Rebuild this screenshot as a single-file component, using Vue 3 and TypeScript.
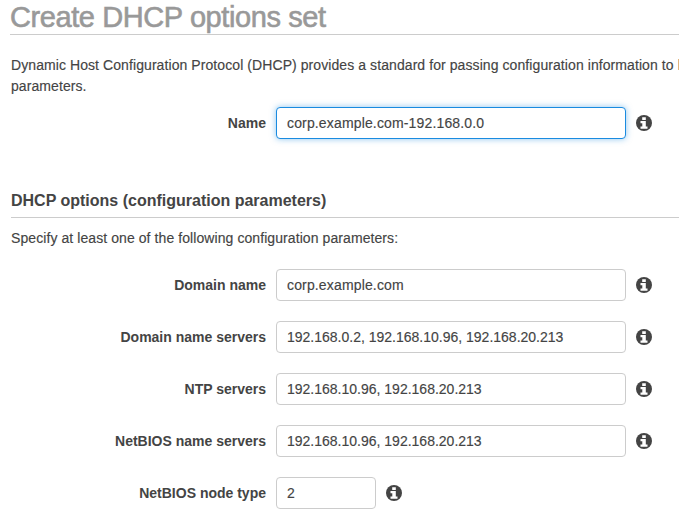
<script setup lang="ts">
import { reactive } from 'vue'

interface Field {
  id: string
  label: string
  value: string
  focused?: boolean
  narrow?: boolean
  host?: boolean
}

const fields = reactive<Field[]>([
  { id: 'name', label: 'Name', value: 'corp.example.com-192.168.0.0', focused: true, host: true },
  { id: 'domain', label: 'Domain name', value: 'corp.example.com', host: true },
  { id: 'dns', label: 'Domain name servers', value: '192.168.0.2, 192.168.10.96, 192.168.20.213' },
  { id: 'ntp', label: 'NTP servers', value: '192.168.10.96, 192.168.20.213' },
  { id: 'netbios', label: 'NetBIOS name servers', value: '192.168.10.96, 192.168.20.213' },
  { id: 'node', label: 'NetBIOS node type', value: '2', narrow: true },
])
</script>

<template>
  <main class="page">
    <h1>Create DHCP options set</h1>
    <p class="intro">Dynamic Host Configuration Protocol (DHCP) provides a standard for passing configuration information to h<br />parameters.</p>
    <template v-for="(field, i) in fields" :key="field.id">
      <section v-if="i === 1" class="section">
        <h2>DHCP options (configuration parameters)</h2>
        <p>Specify at least one of the following configuration parameters:</p>
      </section>
      <div class="row">
        <label :for="field.id">{{ field.label }}</label>
        <input :id="field.id" v-model="field.value" type="text" spellcheck="false" :class="{ focused: field.focused, narrow: field.narrow, host: field.host }" />
        <svg class="info" width="16" height="16" viewBox="0 0 16 16">
          <circle cx="8" cy="8" r="8" />
          <path d="M6.2 2.3h3.6v2.8H6.2zM4.5 6.1h5.3v5.4h1.7v2.2h-7v-2.2h1.8V8.2H4.5z" />
        </svg>
      </div>
    </template>
  </main>
</template>

<style>
body { margin: 0; background: #fff; }
</style>
<style scoped>
.page { box-sizing: border-box; width: 100%; height: 522px; overflow: hidden; padding-left: 11px; font-family: "Liberation Sans", Arial, sans-serif; font-size: 14px; line-height: 21px; color: #444; -webkit-text-stroke: 0.15px currentColor; }
h1, h2, p { margin: 0; white-space: nowrap; }
h1 { height: 34px; margin-left: -1px; border-bottom: 1px solid #ccc; font-size: 29px; font-weight: normal; line-height: 34px; letter-spacing: -0.41px; color: #999; -webkit-text-stroke: 0.6px currentColor; }
.intro { height: 52px; padding-top: 20px; letter-spacing: 0.08px; }
.row { display: flex; align-items: center; height: 32px; margin-bottom: 20px; }
label { width: 255px; margin-right: 10px; font-weight: bold; text-align: right; white-space: nowrap; -webkit-text-stroke: 0; }
input { box-sizing: border-box; width: 350px; height: 32px; margin: 0; border: 1px solid #ccc; border-radius: 4px; padding: 0 10px; background: #fff; color: #444; font: inherit; outline: none; -webkit-text-stroke: inherit; }
.host { letter-spacing: 0.15px; }
.focused { border-color: #1a8be0; box-shadow: 0 0 6px rgba(26, 139, 224, 0.5); }
.narrow { width: 100px; }
.info { margin-left: 10px; fill: #444; }
.info path { fill: #fff; }
.section { box-sizing: border-box; height: 110px; padding-top: 31px; }
h2 { height: 27px; border-bottom: 1px solid #ccc; font-size: 16px; font-weight: bold; line-height: 21px; -webkit-text-stroke: 0; }
.section p { padding-top: 10px; letter-spacing: 0.08px; }
</style>
